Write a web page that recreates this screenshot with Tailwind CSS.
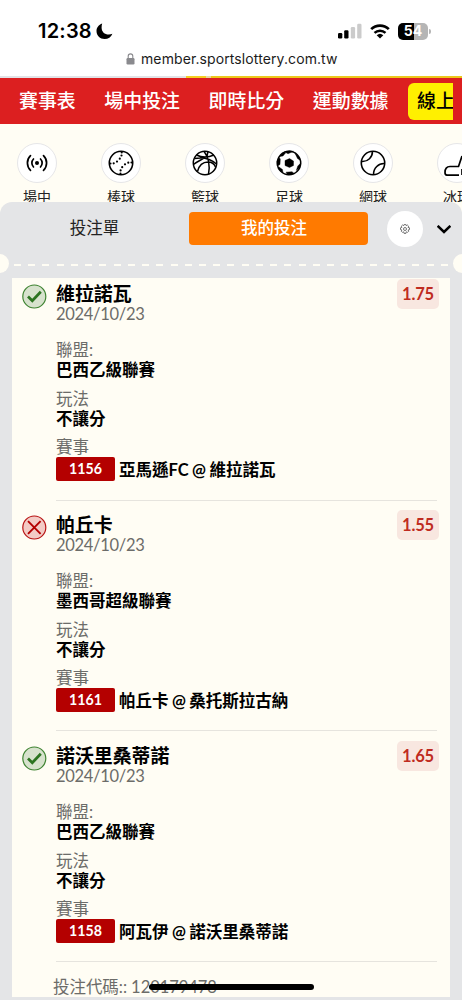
<!DOCTYPE html>
<html lang="zh-Hant">
<head>
  <meta charset="UTF-8" />
  <meta name="viewport" content="width=device-width, initial-scale=1.0"/>
  <title>我的投注</title>
  <script src="https://cdn.jsdelivr.net/npm/@tailwindcss/browser@4"></script>
</head>
<body class="bg-[#fffdf4] text-black font-['Lato','Noto_Sans_CJK_TC',sans-serif]">
  <div class="relative w-[462px] h-[1000px] overflow-hidden flex flex-col">

    <!-- Status bar -->
    <header class="h-[76px] shrink-0 bg-white font-['Inter',sans-serif]">
      <div class="h-[46px] pt-[15px] pl-[38px] pr-[31px] flex justify-between">
        <div class="flex items-center h-8">
          <span class="text-[20px] leading-8 font-semibold tracking-[0.200px] w-[55px] whitespace-nowrap">12:38</span>
          <svg class="w-[17px] h-[17px] ml-[3px]" viewBox="0 0 17 17"><path d="M6.200.6C2.700 1.700.5 4.700.5 8.100c0 4.500 3.500 8 8.100 8 3.600 0 6.500-2 7.800-5.300-1.200.5-2.300.7-3.500.700-4.400 0-7.300-2.900-7.300-7.100 0-1.400.2-2.700.6-3.800z"/></svg>
        </div>
        <div class="flex items-center h-8">
          <svg class="w-[24px] h-[16px]" viewBox="0 0 24 16">
            <rect x="0" y="10" width="4.300" height="5.500" rx="1.200"/>
            <rect x="6.200" y="7.300" width="4.300" height="8.200" rx="1.200"/>
            <rect x="12.800" y="4" width="4.300" height="11.500" rx="1.200" fill="#cbcbcb"/>
            <rect x="19.200" y="0.700" width="4.300" height="14.800" rx="1.200" fill="#cbcbcb"/>
          </svg>
          <svg class="w-[20px] h-[15px] ml-[8px]" viewBox="0 0 20 15">
            <path d="M1.200 5.100a12.700 12.700 0 0 1 17.600 0" fill="none" stroke="#000" stroke-width="2.700"/>
            <path d="M4.500 8.900a8 8 0 0 1 11 0" fill="none" stroke="#000" stroke-width="2.500"/>
            <path d="M10 14.600 6.700 11.300a4.800 4.800 0 0 1 6.600 0z"/>
          </svg>
          <div class="ml-[8px] w-[30px] h-[17px] rounded-[5px] flex items-center justify-center bg-linear-to-r from-black from-54% to-[#b5b5b5] to-54% text-white text-[14px] font-bold leading-none">54</div>
          <div class="w-[2px] h-[5px] ml-[1px] rounded-r bg-[#b5b5b5]"></div>
        </div>
      </div>
      <div class="flex items-center pl-[126px] h-[25px]">
        <svg class="w-[9px] h-[12px]" viewBox="0 0 9 12"><rect x="0.500" y="5" width="8" height="6.500" rx="1.200" fill="#8a8a8e"/><path d="M2.200 5.500V3.200a2.300 2.300 0 0 1 4.600 0v2.300" fill="none" stroke="#8a8a8e" stroke-width="1.100"/></svg>
        <span class="ml-[6px] text-[14px] text-[#1b1b1b] tracking-[0.100px] whitespace-nowrap">member.sportslottery.com.tw</span>
      </div>
    </header>

    <div class="h-[2px] shrink-0 flex bg-[#e2e2e6] pl-[186px]">
      <div class="w-[20px] bg-[#f5cf22]"></div>
      <div class="w-[5px] bg-[#e9d9a0]"></div>
      <div class="flex-1 bg-[#ecc81c]"></div>
    </div>

    <!-- Main nav -->
    <nav class="h-[46px] shrink-0 bg-[#dc1f20] pl-[19px] pr-[9px]">
      <div class="h-full flex items-center gap-[28.700px] overflow-hidden whitespace-nowrap text-white text-[18.900px] font-medium">
        <a class="shrink-0">賽事表</a>
        <a class="shrink-0">場中投注</a>
        <a class="shrink-0">即時比分</a>
        <a class="shrink-0">運動數據</a>
        <a class="shrink-0 -ml-[9px] h-[37px] leading-[36px] pl-[9px] pr-2 rounded-[6px] bg-[#fff000] text-black">線上投注</a>
      </div>
    </nav>

    <!-- Sports -->
    <section class="h-[78px] shrink-0 overflow-hidden">
      <div class="-ml-[4.500px] pt-[19px] flex text-[14px] text-[#222] text-center leading-[20px]">
        <div class="w-[84px] shrink-0 flex flex-col items-center gap-[4px] pr-px">
          <div class="size-[40px] rounded-full bg-white border border-[#e6e6e8] flex items-center justify-center">
            <svg class="size-[26px]" viewBox="0 0 26 26" fill="none" stroke="#000" stroke-width="1.700" stroke-linecap="round"><circle cx="13" cy="13" r="2" fill="#000" stroke="none"/><path d="M9.500 9a5.700 5.700 0 0 0 0 8M16.500 9a5.700 5.700 0 0 1 0 8M6.500 5.700a10.200 10.200 0 0 0 0 14.600M19.500 5.700a10.200 10.200 0 0 1 0 14.600"/></svg>
          </div>
          <span>場中</span>
        </div>
        <div class="w-[84px] shrink-0 flex flex-col items-center gap-[4px] pr-px">
          <div class="size-[40px] rounded-full bg-white border border-[#e6e6e8] flex items-center justify-center">
            <svg class="size-[26px]" viewBox="0 0 26 26" fill="none" stroke="#000" stroke-width="1.600"><circle cx="13" cy="13" r="11.700"/><path d="M13.700 2.500v.01M13.500 5.500v.01M11.800 8.700v.01M9 11.600v.01M5.700 13.300v.01M2.500 13.500v.01M23.500 12.500v.01M20.300 12.700v.01M17 14.300v.01M14.200 17.200v.01M12.600 20.400v.01M12.500 23.500v.01" stroke-width="2.200" stroke-linecap="round"/></svg>
          </div>
          <span>棒球</span>
        </div>
        <div class="w-[84px] shrink-0 flex flex-col items-center gap-[4px] pr-px">
          <div class="size-[40px] rounded-full bg-white border border-[#e6e6e8] flex items-center justify-center">
            <svg class="size-[26px]" viewBox="0 0 26 26" fill="none" stroke="#000" stroke-width="1.500"><circle cx="13" cy="13" r="11.700"/><path d="M12 1.300c4.500 6 6 15 4.500 23M4.500 5c5 2.500 12 2.500 17.500 0M2.500 8.500c9-1.500 17 1 22 5.500M1.500 14.500c5-4 8.500-4.500 13.500-8.500l1-4.500M5.500 21.500c1.500-6 5-9.500 10.500-9.500 4 0 6.500 2.500 7.500 5"/></svg>
          </div>
          <span>籃球</span>
        </div>
        <div class="w-[84px] shrink-0 flex flex-col items-center gap-[4px] pr-px">
          <div class="size-[40px] rounded-full bg-white border border-[#e6e6e8] flex items-center justify-center">
            <svg class="size-[26px]" viewBox="0 0 26 26"><circle cx="13" cy="13" r="11.700" fill="none" stroke="#000" stroke-width="1.500"/><path d="M9 10.500 13.500 8.600 17.500 11v4.500L13.500 17.500 9 15.500zM8.500 1.800 12 3.800l5.500-2.500-4-.5zM19 3.200l4.500 4.300 1 3-3-2zM24.800 13l-3 3-1.500 4.500 3.500-3zM18.500 23.700l-2.500-2-6 .5 1.500 2.600zM7 23l-.5-3.500L3 17l-1 1.500zM1.200 16l2.800-1.500.3-5.500-1.300-1.500-2 4zM3.500 6.500 7 6l2.500-3-1.500-1z" stroke="#000" stroke-width=".4"/></svg>
          </div>
          <span>足球</span>
        </div>
        <div class="w-[84px] shrink-0 flex flex-col items-center gap-[4px] pr-px">
          <div class="size-[40px] rounded-full bg-white border border-[#e6e6e8] flex items-center justify-center">
            <svg class="size-[26px]" viewBox="0 0 26 26" fill="none" stroke="#000" stroke-width="1.600"><circle cx="13" cy="13" r="11.700"/><path d="M12.500 1.300c0 6-4.500 10.500-10.500 10.200M24.500 13.500c-6-.3-11 4.500-11 11"/></svg>
          </div>
          <span>網球</span>
        </div>
        <div class="w-[84px] shrink-0 flex flex-col items-center gap-[4px] pr-px">
          <div class="size-[40px] rounded-full bg-white border border-[#e6e6e8] flex items-center justify-center">
            <svg class="size-[26px]" viewBox="0 0 26 26" fill="none" stroke="#000" stroke-width="1.700" stroke-linejoin="round"><path d="M18 6l-3.500 10.500H6c-3.500 0-5 2.500-5 6 0 1.800.7 2.700 2.500 2.700H15M18 19v6"/></svg>
          </div>
          <span>冰球</span>
        </div>
      </div>
    </section>

    <!-- Bet slip panel -->
    <main class="flex-1 bg-[#e4e5e7] rounded-t-[12px] flex flex-col">
      <div class="h-[53px] shrink-0 flex items-center text-[16.500px]">
        <div class="w-[189px] text-center text-[#222]">投注單</div>
        <div class="w-[179px] h-[33px] leading-[33px] pr-[9px] rounded-[4px] bg-[#ff7a00] text-white text-center font-medium">我的投注</div>
        <div class="ml-[19px] size-[36px] rounded-full bg-white flex items-center justify-center">
          <svg class="size-[10px]" viewBox="0 0 10 10" fill="none" stroke="#555" stroke-width="0.800" stroke-linejoin="round"><circle cx="5" cy="5" r="1.500"/><path d="M4.200.5h1.600l.3 1.100 1.300-.6 1.200 1.200-.6 1.200 1.500.4v1.800l-1.400.4.6 1.200-1.200 1.200-1.300-.6-.4 1.700H4.200l-.4-1.700-1.300.6-1.200-1.200.6-1.200L.5 5.600V3.800l1.400-.4-.6-1.200L2.500 1l1.300.6z"/></svg>
        </div>
        <svg class="ml-[14px] mt-[2px] w-[14px] h-[9px]" viewBox="0 0 14 9"><path d="M1.500 1.700 7 7l5.500-5.300" fill="none" stroke="#000" stroke-width="2.500" stroke-linecap="square"/></svg>
      </div>

      <!-- Ticket perforation -->
      <div class="h-[23px] shrink-0 flex justify-between -mx-[10px]">
        <div class="-mt-px size-[19px] rounded-full bg-[#fffdf4]"></div>
        <div class="flex-1 mt-[9px] ml-[5px] mr-[4px] h-[2px] bg-[repeating-linear-gradient(90deg,#fffdf4_0_7px,transparent_7px_14.230px)]"></div>
        <div class="-mt-px size-[19px] rounded-full bg-[#fffdf4]"></div>
      </div>

      <div class="mx-[12px] h-[719px] shrink-0 bg-[#fffdf4] pt-px pl-[10px] pr-[11px] text-[16.500px] overflow-hidden">
        <article class="h-[230.800px] flex">
          <svg class="mt-[5px] size-[25px] shrink-0" viewBox="0 0 25 25"><circle cx="12.300" cy="12.500" r="11.500" fill="#d7e2cd" stroke="#3f8432" stroke-width="1.200"/><path d="M6 12.500l4.300 4.300 8.500-9" fill="none" stroke="#2c7420" stroke-width="2.700"/></svg>
          <div class="ml-[9px] flex-1 h-[221.500px] border-b border-[#e6e4de] pt-[5px] mr-[2px] leading-[20px]">
            <div class="flex justify-between h-[20px] -mr-[2px]">
              <h3 class="text-[18.900px] font-bold">維拉諾瓦</h3>
              <span class="-mt-[5px] w-[42px] h-[30px] leading-[31px] rounded-[5px] bg-[#f8e7e0] text-[#bf2b20] font-bold text-center tracking-[-0.200px]">1.75</span>
            </div>
            <p class="text-[#6c6c69] tracking-[-0.300px]">2024/10/23</p>
            <p class="mt-[16px] text-[#6c6c69]">聯盟:</p>
            <p class="font-bold">巴西乙級聯賽</p>
            <p class="mt-[9px] text-[#6c6c69]">玩法</p>
            <p class="font-bold">不讓分</p>
            <p class="mt-[8px] text-[#6c6c69]">賽事</p>
            <div class="flex items-center gap-[4px] font-bold">
              <span class="w-[59px] h-[24px] leading-[24px] rounded-[2px] bg-[#b40000] text-white text-[14.200px] text-center">1156</span>
              <span class="pt-[2px] [word-spacing:-0.600px]">亞馬遜FC @ 維拉諾瓦</span>
            </div>
          </div>
        </article>

        <article class="h-[230.800px] flex">
          <svg class="mt-[5px] size-[25px] shrink-0" viewBox="0 0 25 25"><circle cx="12.300" cy="12.500" r="11.500" fill="#f3cbc5" stroke="#b81414" stroke-width="1.200"/><path d="M6 6.200l12.600 12.600M18.600 6.200 6 18.800" fill="none" stroke="#b40000" stroke-width="1.900"/></svg>
          <div class="ml-[9px] flex-1 h-[221.500px] border-b border-[#e6e4de] pt-[5px] mr-[2px] leading-[20px]">
            <div class="flex justify-between h-[20px] -mr-[2px]">
              <h3 class="text-[18.900px] font-bold">帕丘卡</h3>
              <span class="-mt-[5px] w-[42px] h-[30px] leading-[31px] rounded-[5px] bg-[#f8e7e0] text-[#bf2b20] font-bold text-center tracking-[-0.200px]">1.55</span>
            </div>
            <p class="text-[#6c6c69] tracking-[-0.300px]">2024/10/23</p>
            <p class="mt-[16px] text-[#6c6c69]">聯盟:</p>
            <p class="font-bold">墨西哥超級聯賽</p>
            <p class="mt-[9px] text-[#6c6c69]">玩法</p>
            <p class="font-bold">不讓分</p>
            <p class="mt-[8px] text-[#6c6c69]">賽事</p>
            <div class="flex items-center gap-[4px] font-bold">
              <span class="w-[59px] h-[24px] leading-[24px] rounded-[2px] bg-[#b40000] text-white text-[14.200px] text-center">1161</span>
              <span class="pt-[2px] [word-spacing:-0.600px]">帕丘卡 @ 桑托斯拉古納</span>
            </div>
          </div>
        </article>

        <article class="h-[230.800px] flex">
          <svg class="mt-[5px] size-[25px] shrink-0" viewBox="0 0 25 25"><circle cx="12.300" cy="12.500" r="11.500" fill="#d7e2cd" stroke="#3f8432" stroke-width="1.200"/><path d="M6 12.500l4.300 4.300 8.500-9" fill="none" stroke="#2c7420" stroke-width="2.700"/></svg>
          <div class="ml-[9px] flex-1 h-[221.500px] border-b border-[#e6e4de] pt-[5px] mr-[2px] leading-[20px]">
            <div class="flex justify-between h-[20px] -mr-[2px]">
              <h3 class="text-[18.900px] font-bold">諾沃里桑蒂諾</h3>
              <span class="-mt-[5px] w-[42px] h-[30px] leading-[31px] rounded-[5px] bg-[#f8e7e0] text-[#bf2b20] font-bold text-center tracking-[-0.200px]">1.65</span>
            </div>
            <p class="text-[#6c6c69] tracking-[-0.300px]">2024/10/23</p>
            <p class="mt-[16px] text-[#6c6c69]">聯盟:</p>
            <p class="font-bold">巴西乙級聯賽</p>
            <p class="mt-[9px] text-[#6c6c69]">玩法</p>
            <p class="font-bold">不讓分</p>
            <p class="mt-[8px] text-[#6c6c69]">賽事</p>
            <div class="flex items-center gap-[4px] font-bold">
              <span class="w-[59px] h-[24px] leading-[24px] rounded-[2px] bg-[#b40000] text-white text-[14.200px] text-center">1158</span>
              <span class="pt-[2px] [word-spacing:-0.600px]">阿瓦伊 @ 諾沃里桑蒂諾</span>
            </div>
          </div>
        </article>

        <p class="pl-[31px] mt-[6px] leading-[20px] text-[#6c6c69] tracking-[-0.050px]">投注代碼:: 120179478</p>
      </div>
    </main>

    <!-- Home indicator -->
    <div class="absolute left-[149px] top-[984px] w-[165px] h-[6px] rounded-full bg-black"></div>
  </div>
</body>
</html>
